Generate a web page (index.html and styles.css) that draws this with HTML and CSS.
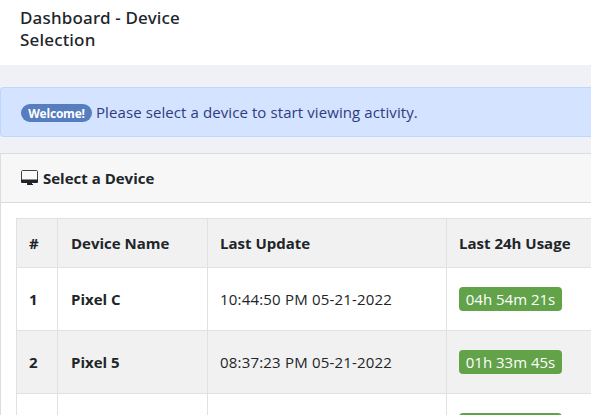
FILE: index.html
```html
<!DOCTYPE html>
<html lang="en">

<head>
  <meta charset="UTF-8" />
  <meta name="viewport" content="width=device-width, initial-scale=1" />
  <title>Dashboard - Device Selection</title>
  <link rel="stylesheet" href="styles.css">
</head>

<body>
  <header class="page-title">
    <h1>Dashboard - Device Selection</h1>
  </header>

  <div class="alert">
    <span class="badge-pill">Welcome!</span>
    <span class="alert-text">Please select a device to start viewing activity.</span>
  </div>

  <div class="card">
    <div class="card-header">
      <svg class="icon" width="18" height="16" viewBox="0 0 18 16">
        <rect x="0.5" y="0.5" width="16" height="11" rx="1" fill="#fafafa" stroke="#3d4347" />
        <path d="M0 9.5H17V12Q17 13 16 13H1Q0 13 0 12Z" fill="#212529" />
        <path d="M6 13H11V14H12V15H6Z" fill="#212529" />
      </svg>
      <strong>Select a Device</strong>
    </div>
    <div class="card-body">
      <table class="devices">
        <thead>
          <tr>
            <th class="col-num">#</th>
            <th class="col-name">Device Name</th>
            <th class="col-update">Last Update</th>
            <th>Last 24h Usage</th>
          </tr>
        </thead>
        <tbody>
          <tr>
            <th>1</th>
            <th>Pixel C</th>
            <td>10:44:50 PM 05-21-2022</td>
            <td><span class="usage">04h 54m 21s</span></td>
          </tr>
          <tr>
            <th>2</th>
            <th>Pixel 5</th>
            <td>08:37:23 PM 05-21-2022</td>
            <td><span class="usage">01h 33m 45s</span></td>
          </tr>
          <tr>
            <th></th>
            <th></th>
            <td></td>
            <td><span class="usage"></span></td>
          </tr>
        </tbody>
      </table>
    </div>
  </div>
</body>

</html>
```
FILE: styles.css
```css
* {
  box-sizing: border-box;
  margin: 0;
  padding: 0;
}

body {
  display: flex;
  flex-direction: column;
  height: 415px;
  overflow: hidden;
  background: #f0f1f6;
  color: #212529;
  font-family: "Open Sans", "Noto Sans", sans-serif;
  font-size: 15px;
  line-height: 24px;
}

.page-title {
  height: 65px;
  padding: 7px 20px;
  background: #fff;
}

h1 {
  width: 200px;
  font-family: "Noto Sans", "Open Sans", sans-serif;
  font-size: 17px;
  font-weight: 500;
  letter-spacing: 0.17px;
  line-height: 22px;
}

.alert {
  display: flex;
  align-items: center;
  height: 50px;
  margin-top: 22px;
  padding: 0 20px;
  border: 1px solid #bfd6ff;
  border-right: 0;
  border-radius: 4px 0 0 4px;
  background: #d4e3ff;
  color: #2e3c80;
}

.alert-text {
  letter-spacing: 0.09px;
}

.badge-pill {
  width: 71px;
  height: 18px;
  margin-top: 2px;
  margin-right: 4px;
  border-radius: 9px;
  background: #567dbe;
  color: #fff;
  font-size: 12px;
  font-weight: 700;
  letter-spacing: -0.2px;
  line-height: 19px;
  text-align: center;
}

.card {
  flex: 1;
  min-height: 0;
  margin-top: 16px;
  border: 1px solid #dcdddf;
  border-width: 1px 0 0 1px;
  background: #fff;
  overflow: hidden;
}

.card-header {
  display: flex;
  align-items: center;
  height: 49px;
  padding: 0 20px;
  border-bottom: 1px solid #d9dadc;
  background: #f7f7f7;
}

.icon {
  margin-right: 4px;
}

.card-body {
  padding: 15px 0 0 15px;
}

.devices {
  width: 100%;
  border-collapse: collapse;
  table-layout: fixed;
}

.devices th,
.devices td {
  height: 63px;
  padding: 0 12px;
  border: 1px solid #dee2e6;
  text-align: left;
  vertical-align: middle;
  white-space: nowrap;
}

.devices th:last-child,
.devices td:last-child {
  border-right: 0;
}

.devices td {
  letter-spacing: 0.19px;
}

.devices thead th {
  height: 49px;
}

.devices thead tr,
.devices tbody tr:nth-child(even) {
  background: #f1f1f1;
}

.col-num {
  width: 41px;
}

.col-name {
  width: 150px;
}

.devices th:nth-child(2) {
  padding-left: 13px;
}

.col-update {
  width: 239px;
}

.usage {
  display: block;
  width: 103px;
  height: 24px;
  border-radius: 4px;
  background: #62a34a;
  color: #fff;
  letter-spacing: 0;
  text-align: center;
}
```
